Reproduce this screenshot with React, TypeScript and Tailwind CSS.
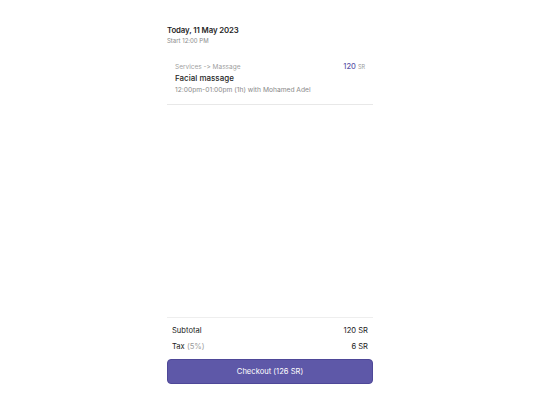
import React from "react";

export default function App() {
  return (
    <div className="w-[535px] h-[402px] bg-white [font-feature-settings:'calt'_0]" style={{ fontFamily: "Inter, 'Noto Sans', sans-serif" }}>
      <div className="ml-[167px] w-[206px] h-full flex flex-col">
        <div className="pt-[25px]">
          <div className="text-[7.8px] leading-[10px] font-semibold text-[#1f1f1f] tracking-[-0.1px]">Today, 11 May 2023</div>
          <div className="text-[6px] leading-[8px] text-[#8a8a8a] mt-[2px]">Start 12:00 PM</div>
        </div>
        <div className="mt-[14px] pl-[8px] pr-[8px] pb-[10px] border-b border-[#e8e8e8]">
          <div className="flex justify-between items-baseline">
            <div className="text-[6.5px] leading-[8px] text-[#a0a0a0]">Services -&gt; Massage</div>
            <div className="leading-[8px]">
              <span className="text-[7.5px] text-[#5c56a6] font-medium">120</span>
              <span className="text-[5.5px] text-[#9a9a9a] ml-[2px]">SR</span>
            </div>
          </div>
          <div className="text-[8px] leading-[10px] text-[#1f1f1f] font-medium mt-[2px]">Facial massage</div>
          <div className="text-[6.7px] leading-[8px] text-[#8a8a8a] mt-[3px]">12:00pm-01:00pm (1h) with Mohamed Adel</div>
        </div>
        <div className="flex-1" />
        <div className="border-t border-[#eeeeee] pt-[8px] px-[5px]">
          <div className="flex justify-between text-[7.6px] leading-[10px] text-[#222]">
            <span>Subtotal</span>
            <span>120 SR</span>
          </div>
          <div className="flex justify-between text-[7.6px] leading-[10px] text-[#222] mt-[6px]">
            <span>Tax <span className="text-[#9a9a9a]">(5%)</span></span>
            <span>6 SR</span>
          </div>
        </div>
        <button className="mt-[7px] mb-[18px] h-[25px] w-full rounded-[4px] bg-[#5e58a8] border border-[#4e4898] text-white text-[7.6px]">
          Checkout (126 SR)
        </button>
      </div>
    </div>
  );
}
